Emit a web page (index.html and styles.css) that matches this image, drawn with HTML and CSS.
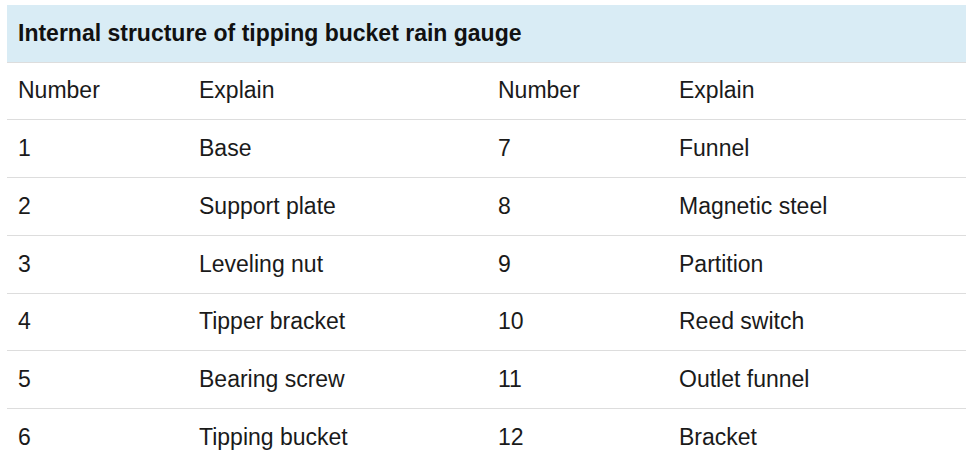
FILE: index.html
```html
<!DOCTYPE html>
<html>
<head>
<meta charset="utf-8">
<link rel="stylesheet" href="styles.css">
</head>
<body>
<table class="spec">
  <colgroup>
    <col class="c1"><col class="c2"><col class="c3"><col class="c4">
  </colgroup>
  <thead>
    <tr><th colspan="4">Internal structure of tipping bucket rain gauge</th></tr>
  </thead>
  <tbody>
    <tr><td>Number</td><td>Explain</td><td>Number</td><td>Explain</td></tr>
    <tr><td>1</td><td>Base</td><td>7</td><td>Funnel</td></tr>
    <tr><td>2</td><td>Support plate</td><td>8</td><td>Magnetic steel</td></tr>
    <tr><td>3</td><td>Leveling nut</td><td>9</td><td>Partition</td></tr>
    <tr><td>4</td><td>Tipper bracket</td><td>10</td><td>Reed switch</td></tr>
    <tr><td>5</td><td>Bearing screw</td><td>11</td><td>Outlet funnel</td></tr>
    <tr><td>6</td><td>Tipping bucket</td><td>12</td><td>Bracket</td></tr>
  </tbody>
</table>
</body>
</html>
```
FILE: styles.css
```css
html, body { margin: 0; padding: 0; background: #fff; }
body { padding: 5px 7px; font-family: "Liberation Sans", Arial, sans-serif; color: #1a1a1a; }
.spec { border-collapse: collapse; width: 959px; table-layout: fixed; }
.c1 { width: 181px; }
.c2 { width: 299px; }
.c3 { width: 181px; }
.c4 { width: 298px; }
.spec th { background: #d9ecf5; text-align: left; font-weight: bold; font-size: 23px; height: 57px; padding: 0 11px; color: #111; border-bottom: 1px solid #ddd; box-sizing: border-box; }
.spec td { font-size: 23px; height: 56.75px; padding: 0 11px; border-top: 1px solid #ddd; }
.spec tbody tr:first-child td { border-top: none; }
```
